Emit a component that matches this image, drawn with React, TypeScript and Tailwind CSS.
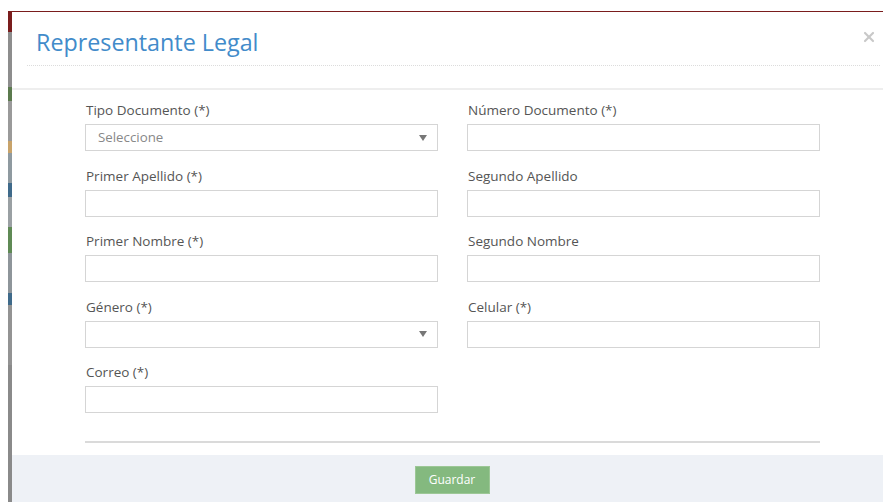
import { X } from 'lucide-react';

type Field = {
  label: string;
  select?: boolean;
  placeholder?: string;
};

const rows: [Field, Field | null][] = [
  [{ label: 'Tipo Documento (*)', select: true, placeholder: 'Seleccione' }, { label: 'Número Documento (*)' }],
  [{ label: 'Primer Apellido (*)' }, { label: 'Segundo Apellido' }],
  [{ label: 'Primer Nombre (*)' }, { label: 'Segundo Nombre' }],
  [{ label: 'Género (*)', select: true }, { label: 'Celular (*)' }],
  [{ label: 'Correo (*)' }, null],
];

// bits of the page behind the overlay that peek out on the left
const backdrop = [
  { h: 'h-[20px]', c: 'bg-[#7a1d1d]' },
  { h: 'h-[55px]', c: 'bg-[#8d8d8d]' },
  { h: 'h-[14px]', c: 'bg-[#5b7a4e]' },
  { h: 'h-[40px]', c: 'bg-[#9a9a9a]' },
  { h: 'h-[12px]', c: 'bg-[#c8a36a]' },
  { h: 'h-[30px]', c: 'bg-[#8f9aa0]' },
  { h: 'h-[14px]', c: 'bg-[#3f6a8a]' },
  { h: 'h-[30px]', c: 'bg-[#9aa0a3]' },
  { h: 'h-[26px]', c: 'bg-[#5f8a55]' },
  { h: 'h-[40px]', c: 'bg-[#8e959a]' },
  { h: 'h-[12px]', c: 'bg-[#3f6a8a]' },
  { h: 'h-[60px]', c: 'bg-[#939393]' },
];

function FormField({ field }: { field: Field }) {
  return (
    <div className="flex flex-col">
      <label className="h-[13px] pl-px text-[13.5px] leading-[13px] text-[#555]">{field.label}</label>
      <div className="mt-[7px] flex h-[27px] items-center justify-between border border-[#d5d5d5] bg-white px-[12px]">
        <span className="text-[13.3px] text-[#888]">{field.placeholder ?? ''}</span>
        {field.select && (
          <span className="mr-[-2px] h-0 w-0 border-x-[4px] border-t-[6px] border-x-transparent border-t-[#777]" />
        )}
      </div>
    </div>
  );
}

export default function App() {
  return (
    <div className="h-[502px] w-[883px] overflow-hidden bg-white pl-[8px] pt-[11px] font-['Open_Sans',sans-serif]">
      <div className="flex h-full border-t border-[#7a1d1d]">
        <div className="flex w-[4px] flex-col">
          {backdrop.map((b, i) => (
            <div key={i} className={`${b.h} ${b.c}`} />
          ))}
          <div className="flex-1 bg-[#8a8a8a]" />
        </div>

        <div className="flex flex-1 flex-col bg-white">
          {/* Header */}
          <div className="border-b-2 border-[#eeeeee]">
            <div className="ml-[15px] mr-[3px] flex h-[54px] items-start justify-between border-b border-dotted border-[#dcdcdc]">
              <h4 className="ml-[9px] mt-[16px] text-[23.3px] leading-[28px] text-[#428bca]">Representante Legal</h4>
              <X className="mr-[3px] mt-[17px] h-[16px] w-[16px] text-[#c8c8c8]" strokeWidth={3.2} />
            </div>
            <div className="h-[22px]" />
          </div>

          {/* Body */}
          <div className="flex flex-col pb-[12px] pl-[73px] pr-[63px] pt-[14px]">
            <div className="flex flex-col gap-[18.5px]">
              {rows.map(([left, right], i) => (
                <div key={i} className="grid grid-cols-2 gap-x-[29px]">
                  <FormField field={left} />
                  {right ? <FormField field={right} /> : <div />}
                </div>
              ))}
            </div>
            <div className="mt-[28px] border-t-2 border-[#dadada]" />
          </div>

          {/* Footer */}
          <div className="flex flex-1 justify-center bg-[#eef1f6] pt-[11px]">
            <button className="ml-[9px] h-[28px] w-[75px] border border-[#9cc796] bg-[#84b97f] text-[12px] text-white">
              Guardar
            </button>
          </div>
        </div>
      </div>
    </div>
  );
}
